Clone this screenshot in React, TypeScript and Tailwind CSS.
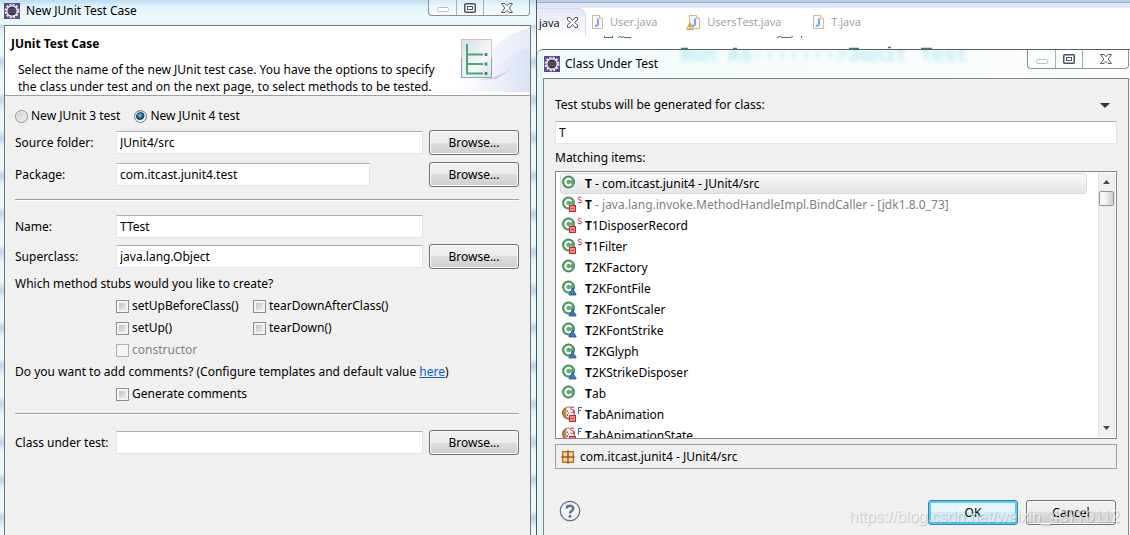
import { useState } from 'react';
import type { ReactNode } from 'react';

type Kind = 'class' | 'private' | 'default' | 'final';

type Item = { kind: Kind; rest: string; note?: string };

const ITEMS: Item[] = [
  { kind: 'class', rest: '', note: ' - com.itcast.junit4 - JUnit4/src' },
  { kind: 'private', rest: '', note: ' - java.lang.invoke.MethodHandleImpl.BindCaller - [jdk1.8.0_73]' },
  { kind: 'private', rest: '1DisposerRecord' },
  { kind: 'private', rest: '1Filter' },
  { kind: 'class', rest: '2KFactory' },
  { kind: 'default', rest: '2KFontFile' },
  { kind: 'default', rest: '2KFontScaler' },
  { kind: 'default', rest: '2KFontStrike' },
  { kind: 'default', rest: '2KGlyph' },
  { kind: 'default', rest: '2KStrikeDisposer' },
  { kind: 'class', rest: 'ab' },
  { kind: 'final', rest: 'abAnimation' },
  { kind: 'final', rest: 'abAnimationState' },
];

function EclipseIcon() {
  return (
    <svg width="16" height="16" viewBox="0 0 16 16" className="shrink-0">
      <rect width="16" height="16" fill="#5c4a86" />
      <circle cx="8" cy="8" r="6.4" fill="none" stroke="#e9e6ee" strokeWidth="2" strokeDasharray="2 1.35" />
      <circle cx="8" cy="8" r="5.2" fill="#3a3549" stroke="#f1eff4" strokeWidth="1.3" />
      <path d="M4.5 6.5h7M4 8h8M4.5 9.5h7" stroke="#6b6580" strokeWidth=".7" />
    </svg>
  );
}

function TypeIcon({ kind }: { kind: Kind }) {
  const final = kind === 'final';
  return (
    <svg width="22" height="18" viewBox="0 1 22 18" className="shrink-0">
      <circle cx="7.500" cy="8" r="6.500" fill={final ? '#94652f' : '#3f8f55'} />
      <circle cx="7.500" cy="8" r="5.300" fill={final ? '#b98c54' : '#62ab74'} />
      {final ? (
        <path d="M5.500 2.500h7v10h-7z" fill="#fff" />
      ) : (
        <path d="M10.300 6.300A3.200 3.200 0 1 0 10.300 9.700" fill="none" stroke="#fff" strokeWidth="2" />
      )}
      {final && <path d="M6.500 5.500v1.500M6.500 9v2M7 8h1" stroke="#94652f" strokeWidth="1" />}
      {(kind === 'private' || final) && (
        <>
          <rect x="8.500" y="10.500" width="6" height="6" fill="#f08a8a" stroke="#cc1f2f" />
          <path d="M10 13.500h3" stroke="#d84450" />
        </>
      )}
      {kind === 'default' && (
        <path d="M11 9.500h1.500v2l2.500 3.500v1H8v-1l2.500-3.500z" fill="#3b7cc0" stroke="#1f5795" strokeWidth=".8" />
      )}
      {kind === 'private' && (
        <path d="M20.500 3C19.500 1.800 17.100 2 17.100 3.500c0 1.800 3.500 1 3.500 3 0 1.700-2.800 1.700-3.700.4" fill="none" stroke="#c4194b" />
      )}
      {final && (
        <>
          <path d="M13 2.700c-1-1.200-3.400-1-3.400.5 0 1.800 3.500 1 3.500 3 0 1.700-2.800 1.700-3.700.4" fill="none" stroke="#c4194b" />
          <path d="M17.500 9V2.500H21M17.500 5.500H20" fill="none" stroke="#2d68a8" />
        </>
      )}
    </svg>
  );
}

function PackageIcon() {
  return (
    <svg width="14" height="14" viewBox="0 0 14 14" className="shrink-0">
      <rect x="1.5" y="1.5" width="11" height="11" fill="#e5a661" stroke="#b4712d" />
      <path d="M3 3h3v3H3zM8 3h3v3H8zM3 8h3v3H3zM8 8h3v3H8z" fill="#f6d5a4" />
      <path d="M7 0v14M0 7h14" stroke="#8a4b12" />
    </svg>
  );
}

function JavaFileIcon({ warning }: { warning?: boolean }) {
  return (
    <svg width="16" height="16" viewBox="0 0 16 16" className="shrink-0">
      <path d="M3.5 1.5h7l3 3v10h-10z" fill="#f4f8fd" stroke="#cdbd93" />
      <path d="M10.5 1.5v3h3" fill="#fff" stroke="#cdbd93" />
      <path d="M9 4.5v5.2c0 2-1.4 2.3-3 1.8" fill="none" stroke="#7fa9d2" strokeWidth="2" />
      {warning && (
        <>
          <path d="M4 8.5 7.5 15.5H.5z" fill="#f8d58a" stroke="#d9a654" />
          <path d="M4 10.5v2.5M4 13.8v1" stroke="#8a6a36" />
        </>
      )}
    </svg>
  );
}

function WizardBanner() {
  return (
    <svg width="80" height="68" viewBox="0 0 80 68" className="shrink-0">
      <defs>
        <linearGradient id="swoosh" x1="0" y1="0" x2="1" y2="0">
          <stop offset="0" stopColor="#fff" />
          <stop offset="1" stopColor="#dbe2f5" />
        </linearGradient>
        <linearGradient id="sheet" x1="0" y1="0" x2="1" y2="1">
          <stop offset="0" stopColor="#d3dfea" />
          <stop offset=".6" stopColor="#f4f8fc" />
          <stop offset="1" stopColor="#d5e2f2" />
        </linearGradient>
      </defs>
      <path d="M80 2C50 8 38 28 4 66H80z" fill="url(#swoosh)" opacity=".7" />
      <path d="M80 22C56 26 40 50 10 66H80z" fill="url(#swoosh)" />
      <path d="M42 52 62 43 46 53 24 54z" fill="#c9bfcf" opacity=".7" />
      <rect x="11.500" y="13.500" width="30" height="38" fill="url(#sheet)" stroke="#8ea0b4" />
      <path d="M11.500 32V13.500h30V32" fill="none" stroke="#d9c4a8" />
      <path d="M17 18v30M16 28.500h17M16 38h17M16 47.500h17" fill="none" stroke="#4fa373" strokeWidth="2" />
      <path d="M34.500 28.500h3M34.500 38h3M34.500 47.500h3" stroke="#3c9a62" strokeWidth="3" />
    </svg>
  );
}

function WindowControls() {
  return (
    <div className="flex h-full rounded-b border border-t-0 border-[#8b9299] bg-white/40">
      <button type="button" aria-label="Minimize" className="flex w-7 items-center justify-center border-r border-[#a5acb2]">
        <svg width="12" height="5" viewBox="0 0 12 5" className="mt-1">
          <rect x=".5" y=".5" width="11" height="4" rx="1" fill="#fff" stroke="#b9bec3" />
        </svg>
      </button>
      <button type="button" aria-label="Maximize" className="flex w-[27px] items-center justify-center border-r border-[#a5acb2]">
        <svg width="12" height="10" viewBox="0 0 12 10">
          <rect x=".75" y=".75" width="10.500" height="8.500" rx="1" fill="#fff" stroke="#4b5262" strokeWidth="1.500" />
          <rect x="3.500" y="3.500" width="5" height="3" fill="#fff" stroke="#4b5262" />
        </svg>
      </button>
      <button type="button" aria-label="Close" className="flex w-[45px] items-center justify-center">
        <svg width="12" height="10" viewBox="0 0 12 10">
          <path d="M.5.5h3.500L6 2.700 8 .5h3.500L8.200 5l3.300 4.500H8L6 7.300 4 9.500H.5L3.800 5z" fill="#fff" stroke="#555b69" />
        </svg>
      </button>
    </div>
  );
}

function TextField({ id, value, onChange, className = '' }: { id: string; value: string; onChange: (v: string) => void; className?: string }) {
  return (
    <input
      id={id}
      type="text"
      value={value}
      onChange={e => onChange(e.target.value)}
      className={`h-[23px] min-w-0 rounded-[1px] border border-[#e2e3ea] border-t-[#abadb3] bg-white px-[3px] outline-none ${className}`}
    />
  );
}

function PushButton({ children, primary }: { children: ReactNode; primary?: boolean }) {
  return (
    <button
      type="button"
      className={`h-[25px] w-[90px] shrink-0 rounded-[3px] border ${
        primary
          ? 'border-[#3c7fb1] bg-linear-to-b from-[#eaf6fd] from-50% to-[#cfeafa] to-50% shadow-[inset_0_0_0_2px_#4fd0f7]'
          : 'border-[#707070] bg-[linear-gradient(180deg,#f2f2f2,#ebebeb_50%,#dddddd_50%,#cfcfcf)] shadow-[inset_0_0_0_1px_#fafafa]'
      }`}
    >
      {children}
    </button>
  );
}

function Check({ children, disabled }: { children: ReactNode; disabled?: boolean }) {
  return (
    <label className={`flex h-[22px] items-center gap-[3px] ${disabled ? 'text-[#838383]' : ''}`}>
      <input
        type="checkbox"
        disabled={disabled}
        className="size-[13px] appearance-none border border-[#8e8f8f] bg-linear-to-br from-[#b4b9c3] to-[#f6f6f6] shadow-[inset_0_0_0_2px_#f4f4f4] checked:from-[#3a6ea5] disabled:border-[#b1b1b1] disabled:from-[#f4f4f4]"
      />
      {children}
    </label>
  );
}

function Radio({ children, checked, onChange }: { children: ReactNode; checked: boolean; onChange: () => void }) {
  return (
    <label className="flex items-center gap-[3px]">
      <input
        type="radio"
        name="junit-version"
        checked={checked}
        onChange={onChange}
        className="size-[13px] appearance-none rounded-full border border-[#8e8f8f] bg-linear-to-br from-[#c9ccd0] to-[#f6f6f6] shadow-[inset_0_0_0_1px_#f4f4f4] checked:border-[#6d7f8d] checked:bg-[radial-gradient(circle_at_45%_40%,#6fd0f5_0px,#1c5a84_3px,#123a58_4px,#e8eef2_5px)]"
      />
      {children}
    </label>
  );
}

function Separator({ className = '' }: { className?: string }) {
  return <hr className={`h-[2px] border-t border-b border-t-[#a0a0a0] border-b-white ${className}`} />;
}

function JUnitWizard() {
  const [version, setVersion] = useState(4);
  const [form, setForm] = useState({ folder: 'JUnit4/src', pkg: 'com.itcast.junit4.test', name: 'TTest', superclass: 'java.lang.Object', target: '' });

  const set = (field: string) => (value: string) => setForm(prev => ({ ...prev, [field]: value }));

  const row = 'grid h-[25px] grid-cols-[101px_1fr_90px] items-center';

  return (
    <section className="flex flex-col border-r border-[#4f5a60] bg-[repeating-linear-gradient(180deg,#ecf8fb_0px,#ecf8fb_16px,#bdd4ee_24px,#e3f3fa_32px,#ecf8fb_38px)] pr-[5px] pl-1">
      <header className="-mr-[5px] -ml-1 flex h-[25px] items-start justify-between bg-[linear-gradient(180deg,#b9dcf3_0px,#dff2fa_6px,#effafb_16px,#e4f5f9_25px)] pr-[6px] pl-1">
        <div className="flex items-center gap-[6px] pt-[2px]">
          <EclipseIcon />
          <h1>New JUnit Test Case</h1>
        </div>
        <div className="h-4">
          <WindowControls />
        </div>
      </header>

      <div className="flex flex-1 flex-col border border-b-0 border-[#6f7678] bg-[#f0f0f0]">
        <div className="flex h-[70px] justify-between border-b border-[#a0a0a0] bg-white">
          <div className="min-w-0 pt-[9px] pl-[6px]">
            <h2 className="font-bold">JUnit Test Case</h2>
            <p className="mt-2 pl-[7px] leading-[17px] whitespace-nowrap">
              Select the name of the new JUnit test case. You have the options to specify
              <br />
              the class under test and on the next page, to select methods to be tested.
            </p>
          </div>
          <div className="-ml-4">
            <WizardBanner />
          </div>
        </div>

        <form className="flex flex-col pt-[11px] pr-[11px] pl-[10px]" onSubmit={e => e.preventDefault()}>
          <div className="mb-[5px] flex h-[18px] gap-[14px]">
            <Radio checked={version === 3} onChange={() => setVersion(3)}>New JUnit 3 test</Radio>
            <Radio checked={version === 4} onChange={() => setVersion(4)}>New JUnit 4 test</Radio>
          </div>

          <div className={row}>
            <label htmlFor="folder">Source folder:</label>
            <TextField id="folder" value={form.folder} onChange={set('folder')} className="mr-[6px]" />
            <PushButton>Browse...</PushButton>
          </div>
          <div className={`${row} mt-[7px]`}>
            <label htmlFor="pkg">Package:</label>
            <TextField id="pkg" value={form.pkg} onChange={set('pkg')} className="mr-[59px]" />
            <PushButton>Browse...</PushButton>
          </div>

          <Separator className="mt-3 mb-[13px]" />

          <div className={row}>
            <label htmlFor="name">Name:</label>
            <TextField id="name" value={form.name} onChange={set('name')} className="mr-[6px]" />
          </div>
          <div className={`${row} mt-[5px]`}>
            <label htmlFor="superclass">Superclass:</label>
            <TextField id="superclass" value={form.superclass} onChange={set('superclass')} className="mr-[6px]" />
            <PushButton>Browse...</PushButton>
          </div>

          <p className="mt-1 leading-[22px]">Which method stubs would you like to create?</p>
          <div className="grid grid-cols-[137px_1fr] pl-[101px]">
            <Check>setUpBeforeClass()</Check>
            <Check>tearDownAfterClass()</Check>
            <Check>setUp()</Check>
            <Check>tearDown()</Check>
            <Check disabled>constructor</Check>
          </div>

          <p className="leading-[22px] whitespace-nowrap">
            Do you want to add comments? (Configure templates and default value{' '}
            <a href="#templates" className="text-[#0066cc] underline">here</a>)
          </p>
          <div className="pl-[101px]">
            <Check>Generate comments</Check>
          </div>

          <Separator className="mt-2 mb-[15px]" />

          <div className={row}>
            <label htmlFor="target" className="whitespace-nowrap">Class under test:</label>
            <TextField id="target" value={form.target} onChange={set('target')} className="mr-[6px]" />
            <PushButton>Browse...</PushButton>
          </div>
        </form>
      </div>
    </section>
  );
}

function EditorStrip() {
  return (
    <div className="flex h-[49px] flex-col overflow-hidden bg-white">
      <div className="h-[3px] border-b border-[#9db0c8] bg-[#b5cfec]" />
      <div className="h-[5px] bg-[#dfe6f7]" />
      <nav className="flex h-7 items-center font-['Open_Sans','Noto_Sans',sans-serif] text-[11px] text-[#9a9a9a]">
        <a href="#active" className="flex h-full w-[49px] items-center gap-[7px] rounded-tr-lg border-t border-r border-[#d5dbe8] bg-linear-to-b from-[#e3e8f5] to-white pl-[2px] text-black">
          java
          <svg width="11" height="11" viewBox="0 0 11 11" className="shrink-0">
            <path d="M.5.5h2.500l2.500 3 2.500-3h2.500v2.500l-3 2.500 3 2.500v2.500H8l-2.500-3-2.500 3H.5V8l3-2.500-3-2.500z" fill="#fff" stroke="#555" />
          </svg>
        </a>
        <a href="#user" className="ml-[3px] flex items-center gap-[5px]"><JavaFileIcon />User.java</a>
        <a href="#users-test" className="ml-[29px] flex items-center gap-[5px]"><JavaFileIcon warning />UsersTest.java</a>
        <a href="#t" className="ml-[29px] flex items-center gap-[5px]"><JavaFileIcon />T.java</a>
      </nav>
      {/* slivers of the two comment lines: one under the tab bar, one above the dialog */}
      <svg width="420" height="13" viewBox="0 0 420 13" className="ml-[10px] shrink-0">
        <path d="M57.500 0v2M65.500 0v2M57 1.500h8M71 1.500l2-1 2 1 2-1M77 1.500h7M230 1.500l3-1 2 1h8l3-1M254.500 0v2" fill="none" stroke="#3f7f5f" />
        <path d="M134 12.500h7M186 12.500h4M302 12.500h10M341 11.500h3M374 12.500h11" fill="none" stroke="#3f7f5f" strokeWidth="1.500" />
      </svg>
    </div>
  );
}

function ListScrollbar() {
  return (
    <div className="my-[1px] mr-[1px] flex w-[17px] flex-col items-center border-x border-[#e3e3e3] bg-[#f0f0f0]">
      <button type="button" aria-label="Scroll up" className="flex h-[18px] items-center justify-center">
        <svg width="7" height="4" viewBox="0 0 7 4"><path d="M0 4 3.500 0 7 4z" fill="#4a4a4a" /></svg>
      </button>
      <div className="h-[15px] w-[15px] shrink-0 rounded-[2px] border border-[#979797] bg-linear-to-r from-[#f5f5f5] from-40% to-[#cdcdd2]" />
      <button type="button" aria-label="Scroll down" className="mt-auto flex h-[18px] items-center justify-center">
        <svg width="7" height="4" viewBox="0 0 7 4"><path d="M0 0 3.500 4 7 0z" fill="#4a4a4a" /></svg>
      </button>
    </div>
  );
}

function ClassDialog() {
  const [query, setQuery] = useState('T');
  const [selected, setSelected] = useState(0);

  return (
    <section className="flex flex-1 flex-col rounded-tl-md border-t border-[#5a5f63] bg-linear-to-r from-[#e2f6f6] to-[#fbfbfb] pr-[1px] pl-[6px]">
      <header className="relative flex h-7 items-start justify-between overflow-hidden bg-linear-to-r from-[#f1fbfb] to-[#fdfdfd]">
        <span aria-hidden="true" className="absolute -top-2 left-[125px] font-[Liberation_Mono] text-[20px] leading-7 font-bold whitespace-pre text-[#7fdcec] opacity-50 blur-[2px]">
          {' Run As------->Junit Test'}
        </span>
        <div className="relative flex items-center gap-[5px] pt-[5px] pl-[1px]">
          <EclipseIcon />
          <h2>Class Under Test</h2>
        </div>
        <div className="relative h-[19px]">
          <WindowControls />
        </div>
      </header>

      <div className="flex flex-1 flex-col border border-b-0 border-[#7d8284] bg-[#f0f0f0] px-[11px] pt-[17px]">
        <div className="flex h-[18px] items-center justify-between">
          <label htmlFor="query">Test stubs will be generated for class:</label>
          <button type="button" aria-label="View menu" className="mr-[7px]">
            <svg width="10" height="5" viewBox="0 0 10 5"><path d="M0 0h10L5 5z" fill="#2f2f4a" /></svg>
          </button>
        </div>
        <TextField id="query" value={query} onChange={setQuery} className="mt-[7px]" />

        <p className="mt-[5px] leading-[18px]">Matching items:</p>
        <div className="mt-1 flex h-[268px] border border-[#828790] bg-white">
          <ul className="min-w-0 flex-1 overflow-hidden pt-[1px] pr-[11px] pl-[5px]">
            {ITEMS.map((item, i) => (
              <li
                key={i}
                onClick={() => setSelected(i)}
                className={`-ml-[1px] flex h-[21px] items-center gap-[2px] rounded-[3px] border whitespace-pre ${
                  i === selected ? 'border-[#d9d9d9] bg-linear-to-b from-[#fafafa] to-[#e5e5e5]' : 'border-transparent'
                }`}
              >
                <TypeIcon kind={item.kind} />
                <span>
                  <b>T</b>
                  {item.rest}
                  {item.note && <span className={i === 0 ? '' : 'text-[#808080]'}>{item.note}</span>}
                </span>
              </li>
            ))}
          </ul>
          <ListScrollbar />
        </div>

        <div className="mt-[5px] flex h-[25px] items-center gap-[5px] border border-[#a0a0a0] px-[5px]">
          <PackageIcon />
          com.itcast.junit4 - JUnit4/src
        </div>

        <div className="mt-[31px] flex items-start gap-2 pr-[1px]">
          <button type="button" aria-label="Help" className="mr-auto ml-1">
            <svg width="22" height="22" viewBox="0 0 22 22">
              <circle cx="11" cy="11" r="9.700" fill="#f2f4f8" stroke="#5c6d8c" strokeWidth="1.200" />
              <path d="M7.700 8.600C7.700 4.800 14.300 4.800 14.300 8.400c0 2.300-3.300 2.500-3.300 5" fill="none" stroke="#5f6f90" strokeWidth="2.400" />
              <circle cx="11" cy="16.300" r="1.500" fill="#5f6f90" />
            </svg>
          </button>
          <PushButton primary>OK</PushButton>
          <PushButton>Cancel</PushButton>
        </div>
      </div>
    </section>
  );
}

export default function App() {
  return (
    <main className="relative grid min-h-screen grid-cols-[537fr_593fr] overflow-hidden font-['Noto_Sans','Open_Sans',sans-serif] text-[12px] leading-[18px] text-black">
      <JUnitWizard />
      <div className="flex min-w-0 flex-col">
        <EditorStrip />
        <ClassDialog />
      </div>
      <span className="pointer-events-none absolute right-[10px] bottom-2 font-['Liberation_Sans',sans-serif] text-[16px] leading-5 text-white/60 [text-shadow:1px_1px_1px_rgb(0_0_0/0.2)]">
        https://blog.csdn.net/weixin_43770112
      </span>
    </main>
  );
}
